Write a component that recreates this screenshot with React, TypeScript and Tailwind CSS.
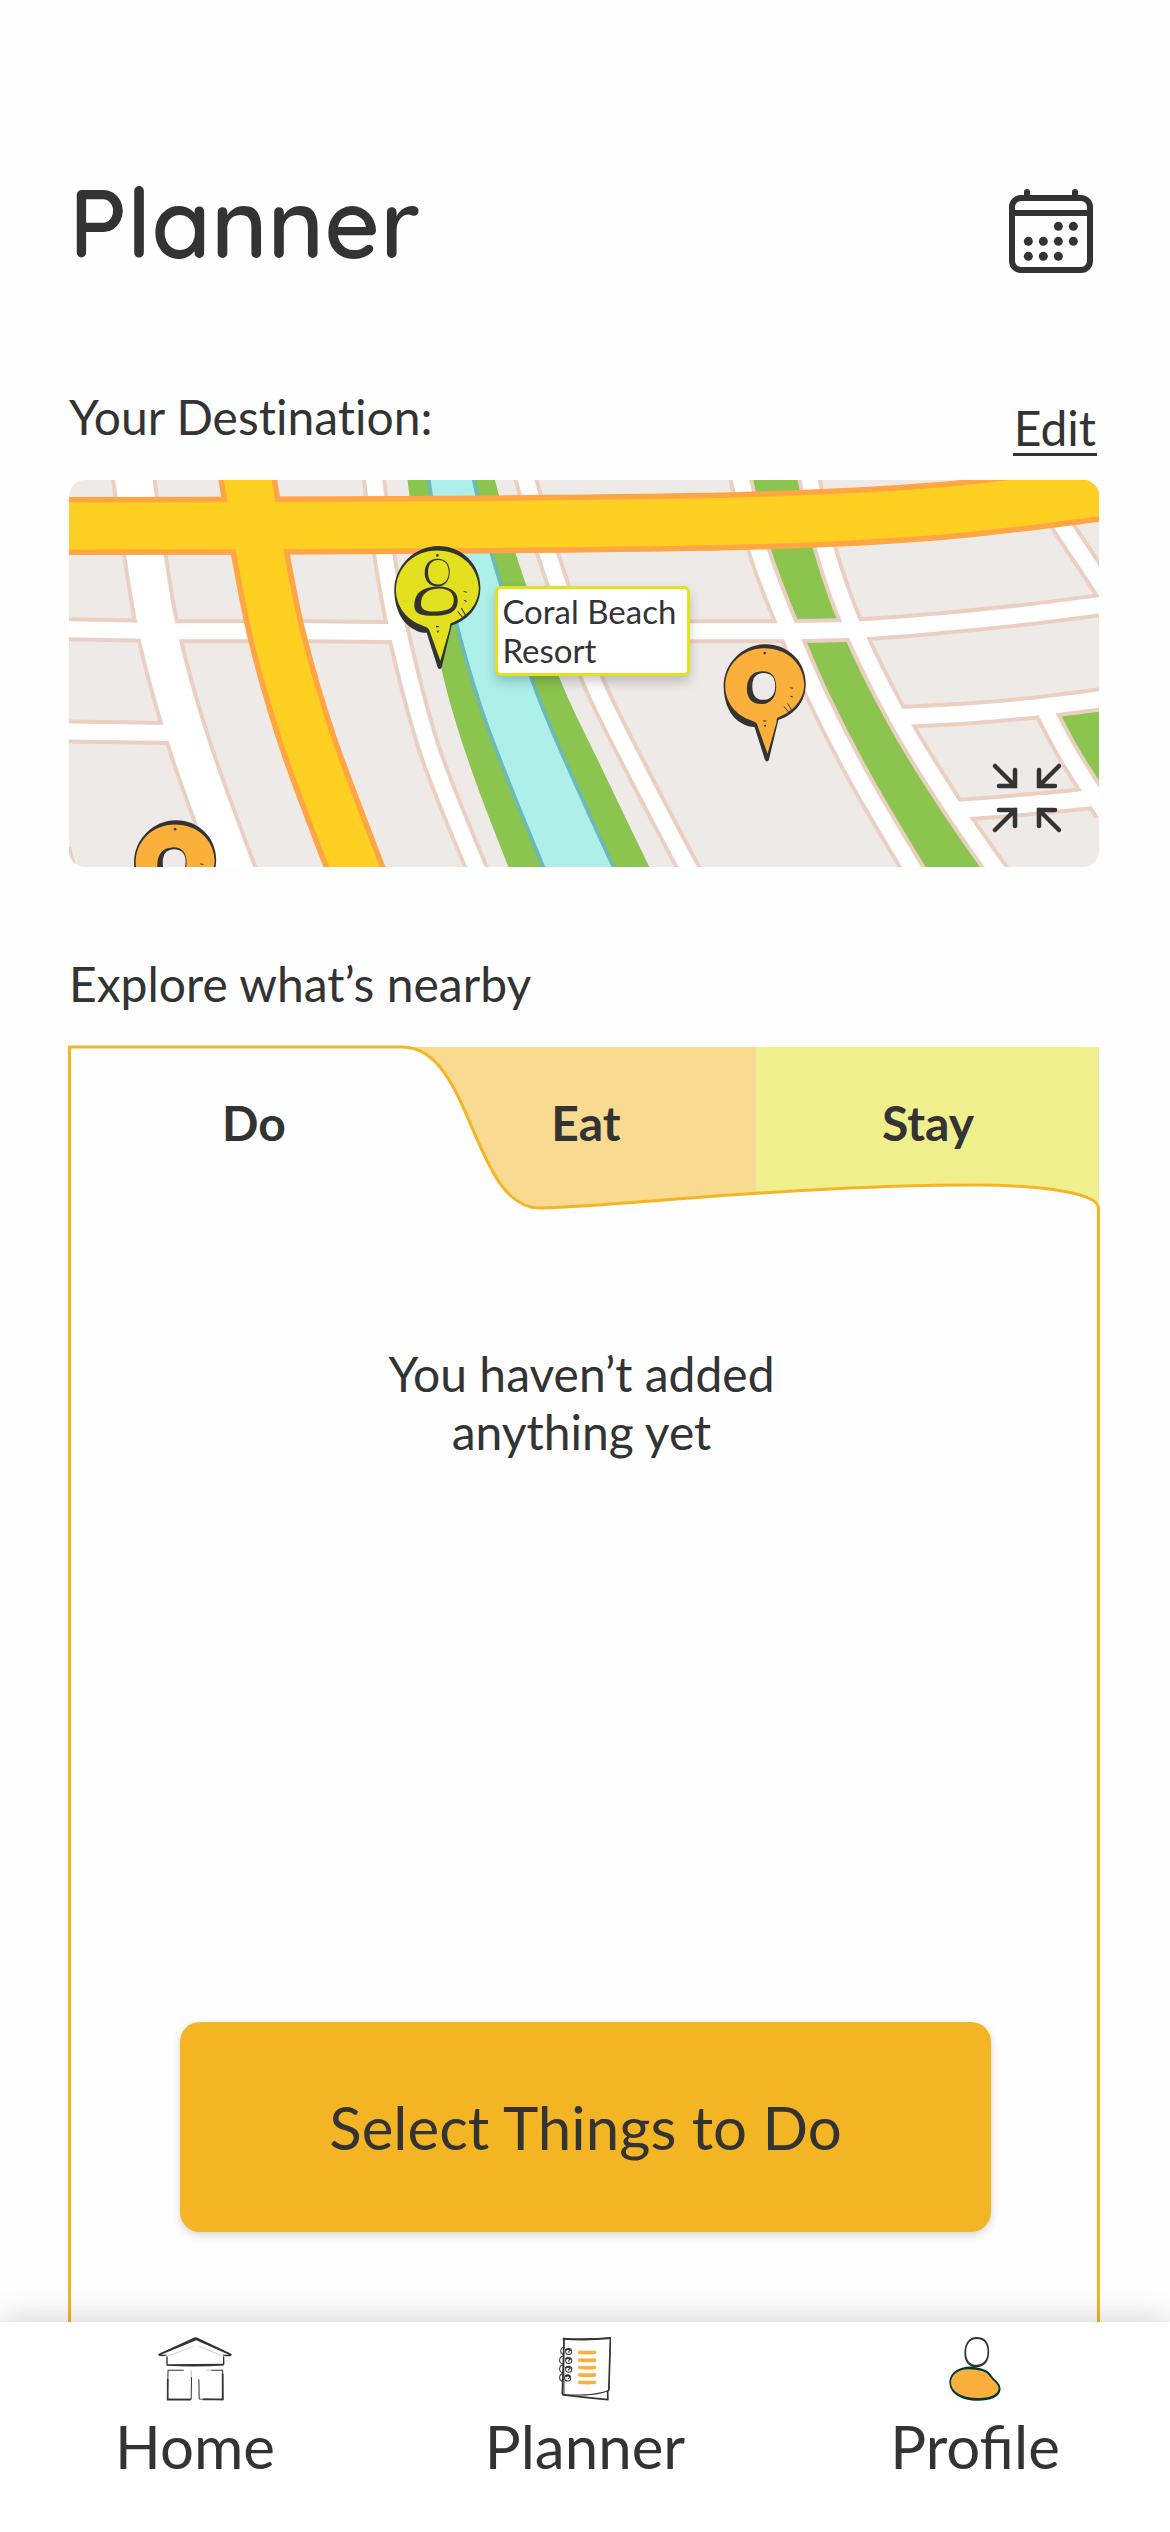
import React from 'react';

type Point = [number, number];

/** Builds a smooth cubic curve that runs through every point. */
function curve(points: Point[], move = 'M'): string {
  let d = `${move}${points[0][0]},${points[0][1]}`;
  for (let i = 0; i < points.length - 1; i++) {
    const p0 = points[Math.max(i - 1, 0)];
    const p1 = points[i];
    const p2 = points[i + 1];
    const p3 = points[Math.min(i + 2, points.length - 1)];
    const c1 = [p1[0] + (p2[0] - p0[0]) / 6, p1[1] + (p2[1] - p0[1]) / 6];
    const c2 = [p2[0] - (p3[0] - p1[0]) / 6, p2[1] - (p3[1] - p1[1]) / 6];
    d += ` C${c1[0]},${c1[1]} ${c2[0]},${c2[1]} ${p2[0]},${p2[1]}`;
  }
  return d;
}

/** Closed area between two edges that both run from top to bottom. */
function band(left: Point[], right: Point[]): string {
  return `${curve(left)} ${curve([...right].reverse(), 'L')} Z`;
}

const shift = (points: Point[], dx: number): Point[] => points.map(([x, y]) => [x + dx, y]);

const parkLeft: Point[] = [[737, 466], [758, 550], [785, 622], [819, 701], [862, 784], [923, 887]];
const parkRight: Point[] = [[806, 466], [825, 550], [851, 624], [898, 719], [949, 802], [1008, 887]];

const streets: { points: Point[]; wide?: boolean }[] = [
  { points: [[133, 474], [144, 550], [160, 641], [191, 750], [237, 877]], wide: true },
  { points: [[60, 629], [170, 631], [310, 631], [400, 632]] },
  { points: [[580, 631], [690, 631], [777, 631], [860, 629], [940, 623], [1020, 615], [1108, 604]] },
  { points: [[60, 731], [183, 733]] },
  { points: [[373, 474], [384, 555], [400, 641], [431, 755], [484, 887]] },
  { points: [[524, 474], [548, 556], [590, 675], [638, 773], [698, 887]] },
  { points: parkLeft },
  { points: parkRight },
  { points: [[895, 717], [970, 713], [1037, 707], [1108, 698]] },
  { points: [[952, 810], [1040, 803], [1108, 796]] },
  { points: [[1045, 712], [1067, 753], [1090, 790], [1104, 812]] },
  { points: [[1045, 500], [1063, 528], [1089, 567], [1114, 605]] },
];

const avenues: Point[][] = [
  [[60, 526], [400, 525], [740, 521], [940, 511], [1110, 491]],
  [[246, 470], [260, 553], [278, 641], [309, 746], [362, 887]],
];

const riverLeft: Point[] = [[426, 478], [438, 553], [455, 627], [478, 706], [508, 786], [542, 869]];
const riverRight: Point[] = [[475, 478], [493, 553], [532, 675], [567, 761], [616, 869]];
const bankLeft: Point[] = [[407, 478], [417, 553], [431, 622], [449, 700], [474, 778], [509, 869]];
const bankRight: Point[] = [[494, 478], [515, 553], [558, 675], [596, 757], [650, 869]];

function Pin({ color, transform, children }: { color: string; transform: string; children: React.ReactNode }) {
  return (
    <g transform={transform}>
      <path
        fill="#333"
        d="M132,0 C203,0 258,55 258,124 C258,178 226,220 172,238 L142,364 Q136,373 130,364 L97,260 C84,260 72,258 60,250 C22,232 0,186 0,132 C0,60 60,0 132,0 Z"
      />
      <path
        fill={color}
        d="M128,13 C198,13 250,60 253,124 C254,172 220,212 169,231 C166,234 167,240 166,246 L138,344 L105,252 C102,244 92,242 84,238 C36,222 5,180 5,132 C5,66 58,13 128,13 Z"
      />
      {children}
      <g fill="#333">
        <circle cx="129" cy="28" r="4" />
        <path d="M208,135l10,2v3l-10-2zM208,161l9,3-1,4-7-4zM125,239l9,1v3h-9zM127,255l7,-2-2,6-3,1z" />
      </g>
      <path d="M190,196l18,22M201,186l14,24" stroke="#333" strokeWidth="3" fill="none" />
      <path d="M28,163l8,2" stroke="#b9b48a" strokeWidth="3" />
    </g>
  );
}

function OrangePin({ transform }: { transform: string }) {
  return (
    <Pin color="#fbb03b" transform={transform}>
      <path fill="#333" d="M120,85 C152,84 166,104 165,136 C164,168 147,188 118,188 C88,188 72,168 73,138 C74,106 90,86 120,85 Z" />
      <path fill="#edeae7" d="M126,91 C150,91 162,106 162,132 C162,158 148,175 124,175 C102,175 90,160 90,133 C90,106 102,91 126,91 Z" />
    </Pin>
  );
}

function CityMap() {
  return (
    <svg viewBox="69 480 1029 387" className="block w-full rounded-2xl" role="img" aria-label="Map around Coral Beach Resort">
      <rect x="69" y="480" width="1029" height="387" fill="#edeae7" />
      <path d="M69,847 L75,869" stroke="#ebd0c1" strokeWidth="4" />
      <path d={band(bankLeft, bankRight)} fill="#8bc44f" />
      <path d={band(riverLeft, riverRight)} fill="#6bbab7" />
      <path d={band(shift(riverLeft, 4), shift(riverRight, -4))} fill="#aef0e9" />
      <path d={band(parkLeft, parkRight)} fill="#8bc44f" />
      <path d="M1047,714 L1069,753 L1087,779 L1104,800 V699 Z" fill="#8bc44f" />
      <g fill="none" stroke="#ebd0c1">
        {streets.map((s, i) => (
          <path key={i} d={curve(s.points)} strokeWidth={s.wide ? 45 : 24} />
        ))}
      </g>
      <g fill="none" stroke="#fff">
        {streets.map((s, i) => (
          <path key={i} d={curve(s.points)} strokeWidth={s.wide ? 37 : 16} />
        ))}
      </g>
      <g fill="none" stroke="#ffa544" strokeWidth="58">
        {avenues.map((a, i) => (
          <path key={i} d={curve(a)} />
        ))}
      </g>
      <g fill="none" stroke="#ffd021" strokeWidth="47">
        {avenues.map((a, i) => (
          <path key={i} d={curve(a)} />
        ))}
      </g>
      <Pin color="#e3e01f" transform="translate(394 546) scale(.3333)">
        <path fill="#333" d="M130,38 C154,38 167,54 166,80 C165,105 151,121 130,121 C106,121 91,106 91,80 C91,54 106,38 130,38 Z" />
        <path fill="#e3e01f" d="M132,42 C152,42 163,56 163,79 C163,100 150,115 132,115 C112,115 101,102 101,79 C101,56 112,42 132,42 Z" />
        <path fill="#333" d="M128,121 C166,119 190,136 190,162 C190,196 168,209 120,209 C80,209 60,204 60,178 C60,140 84,123 128,121 Z" />
        <path fill="#e3e01f" d="M134,127 C164,127 178,142 178,162 C178,184 166,194 128,196 C94,197 80,192 80,172 C80,146 98,128 134,127 Z" />
      </Pin>
      <OrangePin transform="translate(723 644) scale(.318)" />
      <OrangePin transform="translate(134 820) scale(.318)" />
    </svg>
  );
}

function CollapseIcon() {
  return (
    <svg viewBox="0 0 68 68" className="size-full overflow-visible" fill="none" stroke="#333" strokeWidth="4.500" strokeLinecap="round" strokeLinejoin="miter" aria-hidden="true">
      <path d="M2,2 L22,22 M22,6 V22 H6" />
      <path d="M66,2 L46,22 M46,6 V22 H62" />
      <path d="M2,66 L22,46 M22,62 V46 H6" />
      <path d="M66,66 L46,46 M46,62 V46 H62" />
    </svg>
  );
}

function CalendarIcon() {
  const dots: Point[] = [
    [148, 112], [193, 112],
    [58, 157], [103, 157], [148, 157], [193, 157],
    [58, 202], [103, 202], [148, 202],
  ];
  return (
    <svg viewBox="0 0 252 252" className="size-full" aria-hidden="true">
      <rect x="9" y="27" width="234" height="216" rx="27" fill="none" stroke="#333" strokeWidth="18" />
      <path d="M9,72 H243 M54,9 V27 M198,9 V27" stroke="#333" strokeWidth="18" />
      <circle cx="54" cy="9" r="9" fill="#333" />
      <circle cx="198" cy="9" r="9" fill="#333" />
      {dots.map(([x, y]) => (
        <circle key={`${x}-${y}`} cx={x} cy={y} r="13.5" fill="#333" />
      ))}
    </svg>
  );
}

function HomeIcon() {
  return (
    <svg viewBox="206 80 221 191" className="h-16" fill="none" stroke="#333" strokeLinejoin="round" aria-hidden="true">
      <path fill="#333" stroke="none" d="M207,131 L316,81 h5 L426,131 l-2,6 q-12,2 -24,-2 l0,-3 q10,2 18,1 L320,90 L215,133 q8,1 17,-1 v3 q-12,4 -24,1 Z" />
      <path d="M233,138 V163" strokeWidth="4" />
      <path d="M402,138 V163" strokeWidth="4" />
      <path fill="#333" stroke="none" d="M231,161 L402,160 l1,5 q-80,5 -171,1 Z" />
      <path d="M233,138 L312,108 M326,107 L402,138" strokeWidth="1" strokeOpacity=".7" />
      <path d="M283,179 L236,179 L234,266 L305,266 L306,200" strokeWidth="3" />
      <path d="M305,205 V180" strokeWidth="1" />
      <path d="M235,205 V267 H304" strokeWidth="5" />
      <path d="M349,179 H365" strokeWidth="1" />
      <path d="M365,179 L399,179 L400,267 L329,265 L328,206" strokeWidth="3" />
      <path d="M399,190 V266 H340" strokeWidth="5" />
    </svg>
  );
}

function PlannerIcon() {
  return (
    <svg viewBox="263 80 158 191" className="h-16" fill="none" stroke="#333" strokeLinejoin="round" aria-hidden="true">
      <path d="M277,86 Q345,90 417,83 L413,238 Q380,256 278,253 Z" strokeWidth="3" fill="#fff" />
      <path d="M274,85 Q345,90 419,83" strokeWidth="6" />
      <path d="M278,86 L273,250" strokeWidth="5" />
      <path d="M416,84 L411,242" strokeWidth="4" />
      <path d="M272,252 Q330,260 409,267 L408,240" strokeWidth="5" />
      {[122, 149, 175, 201].map((y, i) => (
        <g key={y} strokeWidth="3">
          <path d={i === 0 ? 'M280,110 C266,110 264,130 277,132' : `M278,${y - 12} C261,${y - 12} 261,${y + 12} 275,${y + 11}`} />
          <circle cx={i === 3 ? 289 : 292} cy={y + 1} r="9" />
          <path d={`M282,${y - 3} Q292,${y - 10} 297,${y}`} strokeWidth="5" />
          <path d={`M290,${y + 3} l4,-1`} strokeWidth="4" />
        </g>
      ))}
      {[126, 149, 171, 193, 215].map((y) => (
        <path key={y} d={`M325,${y} Q347,${y + 2} 369,${y}`} stroke="#fbb03b" strokeWidth="11" strokeLinecap="round" />
      ))}
    </svg>
  );
}

function ProfileIcon() {
  return (
    <svg viewBox="233 80 156 191" className="h-16" aria-hidden="true">
      <path fill="#333" d="M316,80 C342,80 353,98 353,124 C353,152 340,170 315,170 C290,170 278,152 279,126 C280,98 292,80 316,80 Z" />
      <path fill="#fff" d="M316,86 C338,86 348,102 348,124 C348,148 335,163 315,163 C295,163 284,148 284,126 C284,102 295,86 316,86 Z" />
      <path fill="#01393a" d="M296,168 C320,170 348,176 358,192 C366,208 387,214 387,236 C385,260 356,270 320,270 C268,270 234,248 234,214 C235,186 262,169 296,168 Z" />
      <path fill="#fbb03b" d="M292,176 C320,178 342,180 352,194 C360,208 381,218 381,234 C380,252 356,262 325,262 C272,262 239,244 239,214 C240,192 262,175 292,176 Z" />
    </svg>
  );
}

function TabShape() {
  return (
    <svg
      viewBox="68 1047 1031 180"
      preserveAspectRatio="none"
      className="pointer-events-none absolute inset-0 size-full overflow-visible"
      aria-hidden="true"
    >
      <rect x="390" y="1047" width="366" height="170" fill="#f8da90" />
      <rect x="756" y="1047" width="342" height="170" fill="#f0ef8d" />
      <path
        d="M69.500,1227 V1047 H402 C472,1047 472,1208 539,1208 C600,1208 790,1185 975,1185 C1045,1185 1097.500,1194 1097.500,1208 V1227"
        fill="#fefefe"
        stroke="#f4b524"
        strokeWidth="3"
      />
    </svg>
  );
}

const navItems = [
  { label: 'Home', icon: <HomeIcon /> },
  { label: 'Planner', icon: <PlannerIcon /> },
  { label: 'Profile', icon: <ProfileIcon /> },
];

export default function App() {
  return (
    <div className="flex min-h-screen flex-col bg-[#fefefe] font-['Lato',sans-serif] text-[48px] leading-[58px] text-[#333]">
      <main className="flex grow flex-col pr-[71px] pl-[69px]">
        <header className="flex items-end justify-between pt-[162px] pr-[6px]">
          <h1 className="font-['Quicksand',sans-serif] text-[96px] leading-[120px] font-semibold">Planner</h1>
          <button type="button" aria-label="Open calendar" className="mb-[9px] size-[84px]">
            <CalendarIcon />
          </button>
        </header>

        <section className="pt-[106px]">
          <div className="flex items-start justify-between">
            <h2 className="[font-variant-ligatures:none]">Your Destination:</h2>
            <a href="#edit" className="mt-[15px] mr-[2px] border-b-3 border-[#333] px-px leading-[50px]">
              Edit
            </a>
          </div>
          <div className="relative mt-6">
            <CityMap />
            <div className="absolute top-[27%] left-[41.4%] mt-px w-[195px] rounded-md border-3 border-[#e3e01f] bg-white px-1 py-[3px] text-[33px] leading-[39px] shadow-[0_6px_12px_rgba(0,0,0,0.2)]">
              Coral Beach Resort
            </div>
            <button type="button" aria-label="Collapse map" className="absolute right-[38px] bottom-[35px] size-[68px]">
              <CollapseIcon />
            </button>
          </div>
        </section>

        <section className="flex grow flex-col pt-[88px]">
          <h2>Explore what’s nearby</h2>
          <div className="relative -mx-px mt-[34px] h-[180px]">
            <TabShape />
            <div role="tablist" className="relative grid h-[152px] grid-cols-3 font-bold">
              <button type="button" role="tab" aria-selected="true" className="pl-7">Do</button>
              <button type="button" role="tab" aria-selected="false" className="pl-1">Eat</button>
              <button type="button" role="tab" aria-selected="false">Stay</button>
            </div>
          </div>
          <div
            role="tabpanel"
            className="-mx-px flex grow flex-col items-center justify-between border-x-3 border-[#f4b524] pt-[118px] pr-[106px] pb-[90px] pl-[109px]"
          >
            <p className="w-[400px] pr-2 text-center">You haven’t added anything yet</p>
            <button
              type="button"
              className="h-[210px] w-full rounded-[20px] bg-[#f4b524] text-[60px] leading-[72px] shadow-[0_3px_9px_rgba(0,0,0,0.16)]"
            >
              Select Things to Do
            </button>
          </div>
        </section>
      </main>

      <nav className="sticky bottom-0 grid grid-cols-3 bg-white pt-[15px] pb-[50px] shadow-[0_0_30px_rgba(0,0,0,0.2)]">
        {navItems.map((item) => (
          <a key={item.label} href={`#${item.label.toLowerCase()}`} className="flex flex-col items-center gap-[9px] text-[60px] leading-[72px]">
            {item.icon}
            {item.label}
          </a>
        ))}
      </nav>
    </div>
  );
}
